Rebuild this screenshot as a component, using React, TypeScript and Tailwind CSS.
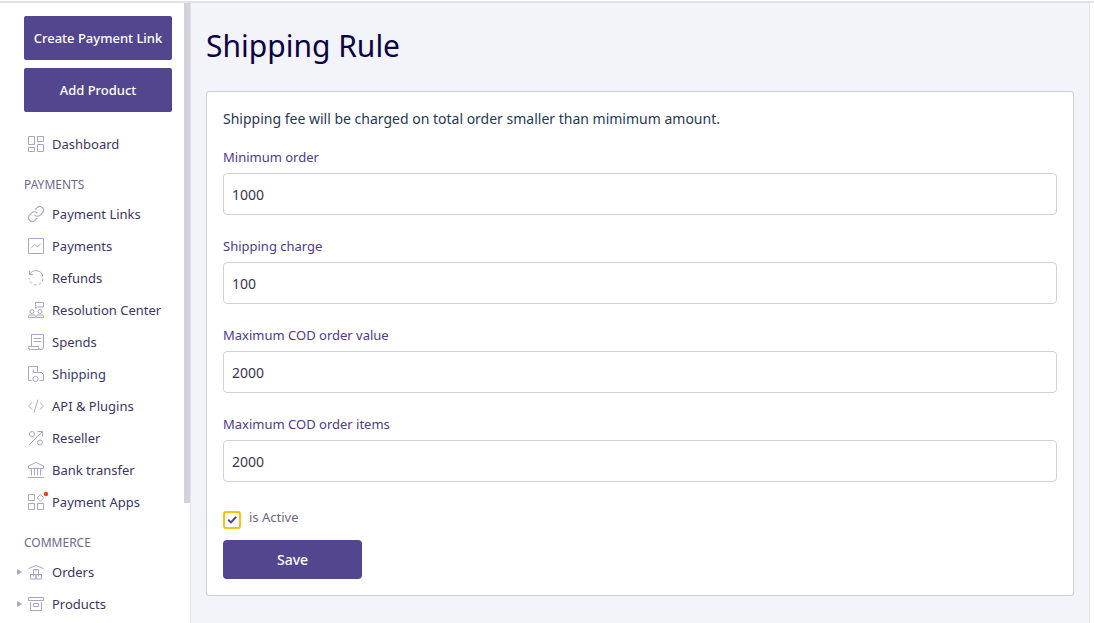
import { useState, type ReactNode } from 'react'

type NavItem = {
  label: string
  icon: ReactNode
  expandable?: boolean
}

function Icon({ children }: { children: ReactNode }) {
  return (
    <svg
      viewBox="0 0 16 16"
      className="size-4 shrink-0 overflow-visible text-[#a9a3cf]"
      fill="none"
      stroke="currentColor"
      strokeWidth="1"
      aria-hidden="true"
    >
      {children}
    </svg>
  )
}

const dashboard: NavItem[] = [
  {
    label: 'Dashboard',
    icon: (
      <Icon>
        <path d="M.5.5h6v8h-6zM9.5.5h6v5h-6zM.5 11.5h6v4h-6zM9.5 8.5h6v7h-6z" />
      </Icon>
    ),
  },
]

const payments: NavItem[] = [
  {
    label: 'Payment Links',
    icon: (
      <Icon>
        <g transform="translate(-1 -1) scale(.75)" strokeWidth="1.5">
          <path d="M10 13a5 5 0 0 0 7.54.54l3-3a5 5 0 0 0-7.07-7.07l-3 3" />
          <path d="M14 11a5 5 0 0 0-7.54-.54l-3 3a5 5 0 0 0 7.07 7.07l3-3" />
        </g>
      </Icon>
    ),
  },
  {
    label: 'Payments',
    icon: (
      <Icon>
        <path d="M.5.5h15v15H.5z" />
        <path d="M3.5 9.5 6 7q.7-.7 1.4 0l1.200 1.400q.7.7 1.400 0l2.700-2.700" />
      </Icon>
    ),
  },
  {
    label: 'Refunds',
    icon: (
      <Icon>
        <path d="M1.500 1v3.500H5M1.700 4.400A7 7 0 0 1 14.800 6.500" />
        <path d="M15 8.500a7 7 0 0 1-.7 2.500M12.700 13.200a7 7 0 0 1-2 1.300M8.300 15a7 7 0 0 1-2.500-.4M3.700 13.400a7 7 0 0 1-1.500-2M1.100 9.200V8" />
      </Icon>
    ),
  },
  {
    label: 'Resolution Center',
    icon: (
      <Icon>
        <path d="M7.500 6.500v-6h8v4.500h-6z" />
        <circle cx="4" cy="9.500" r="2" />
        <circle cx="12" cy="9.500" r="2" />
        <path d="M.5 15.500v-1A1.500 1.500 0 0 1 2 13h4a1.500 1.500 0 0 1 1.500 1.500v1zM8.500 15.500v-1A1.500 1.500 0 0 1 10 13h4a1.500 1.500 0 0 1 1.500 1.500v1z" />
      </Icon>
    ),
  },
  {
    label: 'Spends',
    icon: (
      <Icon>
        <path d="M3.500 12.500V.5h12V13a2.500 2.500 0 0 1-2.500 2.500H2.500a2 2 0 0 1-2-2v-1h10v1a2 2 0 0 0 2 2" />
        <path d="M6 4.500h7M6 7.500h7" />
      </Icon>
    ),
  },
  {
    label: 'Shipping',
    icon: (
      <Icon>
        <path d="M3.500 14.500h-3V.5h9v6h4l2 2v6h-4M5.500 3.500v3h4" />
        <circle cx="7.500" cy="13" r="2.600" />
      </Icon>
    ),
  },
  {
    label: 'API & Plugins',
    icon: (
      <Icon>
        <path d="M4 4.500.6 8 4 11.500M12 4.500 15.400 8 12 11.500M10 1.500l-4 13" />
      </Icon>
    ),
  },
  {
    label: 'Reseller',
    icon: (
      <Icon>
        <circle cx="4" cy="4" r="2.500" />
        <circle cx="12" cy="12.500" r="2.500" />
        <path d="M1.500 14.500 14.500 1.500M9.500 1.500h5v5" />
      </Icon>
    ),
  },
  {
    label: 'Bank transfer',
    icon: (
      <Icon>
        <path d="M0 15.500h16M.5 6.500V4L8 .5 15.500 4v2.500z" />
        <path d="M3.500 6.500v7M6.500 6.500v7M9.500 6.500v7M12.500 6.500v7M8 3.500v1" />
      </Icon>
    ),
  },
  {
    label: 'Payment Apps',
    icon: (
      <Icon>
        <path d="M.5.5h6v6h-6zM.5 9.500h6v6h-6zM9.500 9.500h6v6h-6zM12.500.5l3.300 3.300-3.300 3.300-3.300-3.300z" />
        <circle cx="18" cy="0" r="2.200" fill="#f0420c" stroke="none" />
      </Icon>
    ),
  },
]

const commerce: NavItem[] = [
  {
    label: 'Orders',
    expandable: true,
    icon: (
      <Icon>
        <path d="M.5 4.500 8 1.500l7.500 3M5.500 5.500h5v5h-5zM2.500 10.500H8v4.500H2.500zM8 10.500h5.500v4.500H8z" />
        <path d="M8 5.500v2M5.500 10.500v2M10.700 10.500v2" />
      </Icon>
    ),
  },
  {
    label: 'Products',
    expandable: true,
    icon: (
      <Icon>
        <path d="M.5 1.500h15v3H.5zM2.500 6v8.500h11V6M5.500 7.500h5v3h-5z" />
      </Icon>
    ),
  },
]

function NavSection({ title, items }: { title?: string; items: NavItem[] }) {
  return (
    <section>
      {title && <h2 className="pt-[17px] pb-[5px] pl-6 text-[12px] leading-4 text-[#6c6a8c]">{title}</h2>}
      <ul>
        {items.map((item) => (
          <li key={item.label}>
            <a href="#" className="flex h-8 items-center pl-4 text-[13px] leading-5 text-[#3b3663]">
              <span className="w-3 shrink-0">
                {item.expandable && (
                  <svg viewBox="0 0 6 6" className="size-[6px] fill-[#a9a3cf]" aria-hidden="true">
                    <path d="M1 0l5 3-5 3z" />
                  </svg>
                )}
              </span>
              {item.icon}
              <span className="ml-2 whitespace-nowrap">{item.label}</span>
            </a>
          </li>
        ))}
      </ul>
    </section>
  )
}

function Field({ id, label, defaultValue }: { id: string; label: string; defaultValue: string }) {
  return (
    <div>
      <label htmlFor={id} className="mb-[6px] block text-[13px] leading-5 text-[#4f3a8c]">
        {label}
      </label>
      <input
        id={id}
        type="text"
        defaultValue={defaultValue}
        className="h-[42px] w-full rounded-[4px] border border-[#d2d2d8] bg-white px-2 text-[14px] text-[#3a3550] outline-none"
      />
    </div>
  )
}

export default function App() {
  const [active, setActive] = useState(true)

  return (
    <div className="flex min-h-screen flex-col bg-white pt-px font-['Noto_Sans',sans-serif]">
      <div className="h-[2px] bg-[#e0e1e9]" />
      <div className="flex flex-1">
        {/* Sidebar */}
        <aside className="flex w-[191px] shrink-0 border-r border-[#e2e3ec]">
          <div className="w-[184px] pt-[13px]">
            <div className="mb-4 flex flex-col gap-2 pr-3 pl-6">
              <button className="h-11 rounded-[2px] bg-[#53468f] pt-[2px] text-[13px] font-medium whitespace-nowrap text-white">
                Create Payment Link
              </button>
              <button className="h-11 rounded-[2px] bg-[#53468f] pt-[2px] text-[13px] font-medium whitespace-nowrap text-white">
                Add Product
              </button>
            </div>
            <nav>
              <NavSection items={dashboard} />
              <NavSection title="PAYMENTS" items={payments} />
              <NavSection title="COMMERCE" items={commerce} />
            </nav>
          </div>
          {/* Scroll thumb */}
          <div className="h-[500px] w-[6px] bg-[#d3d2da]" />
        </aside>

        {/* Content */}
        <main className="mr-1 flex-1 border-r border-[#e2e3ec] bg-[#f3f4f9] px-[15px] pt-[23px]">
          <h1 className="mb-[25px] text-[30px] leading-10 text-[#0b0146]">Shipping Rule</h1>

          <form
            className="rounded-[3px] border border-[#cad0d8] bg-white px-4 pt-[17px] pb-4"
            onSubmit={(e) => e.preventDefault()}
          >
            <p className="mb-[18px] text-[14px] leading-5 text-[#1f3a54]">
              Shipping fee will be charged on total order smaller than mimimum amount.
            </p>

            <div className="flex flex-col gap-[21px]">
              <Field id="minimum-order" label="Minimum order" defaultValue="1000" />
              <Field id="shipping-charge" label="Shipping charge" defaultValue="100" />
              <Field id="max-cod-value" label="Maximum COD order value" defaultValue="2000" />
              <Field id="max-cod-items" label="Maximum COD order items" defaultValue="2000" />
            </div>

            <div className="mt-[23px] flex items-start gap-2">
              <span className="mt-[6px] grid size-[18px]">
                <input
                  id="is-active"
                  type="checkbox"
                  checked={active}
                  onChange={(e) => setActive(e.target.checked)}
                  className="col-start-1 row-start-1 size-[18px] appearance-none rounded-[3px] border-2 border-[#fdc00f] bg-white"
                />
                {active && (
                  <svg
                    viewBox="0 0 18 18"
                    className="pointer-events-none col-start-1 row-start-1 size-[18px]"
                    fill="none"
                    stroke="#53468f"
                    strokeWidth="2"
                    aria-hidden="true"
                  >
                    <path d="M5.200 8.800 8 11.400l5.200-5.600" />
                  </svg>
                )}
              </span>
              <label htmlFor="is-active" className="text-[13px] leading-6 text-[#6a6880]">
                is Active
              </label>
            </div>

            <button
              type="submit"
              className="mt-[11px] h-[39px] w-[139px] rounded-[4px] bg-[#53468f] text-[14px] font-medium text-white"
            >
              Save
            </button>
          </form>
        </main>
      </div>
    </div>
  )
}
